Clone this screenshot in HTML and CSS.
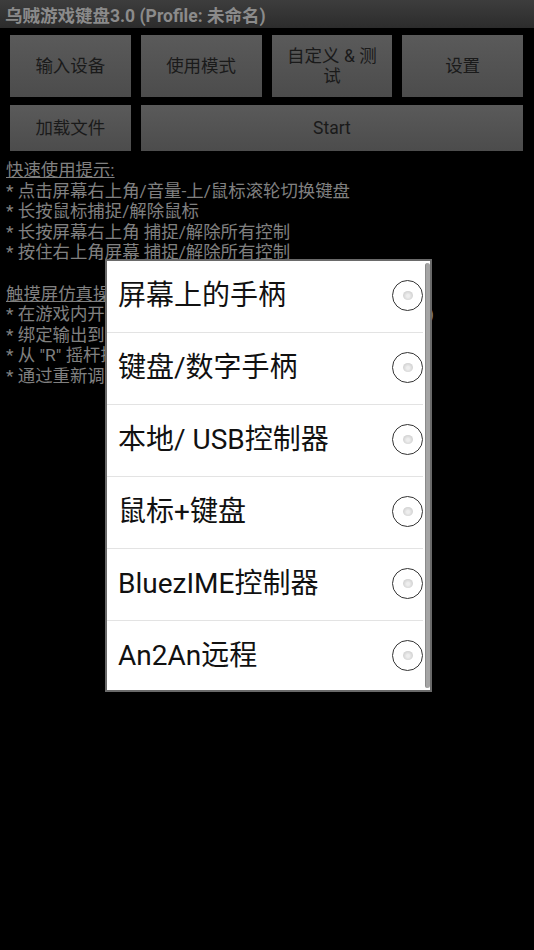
FILE: index.html
```html
<!DOCTYPE html>
<html lang="zh-CN">
<head>
<meta charset="utf-8">
<title>乌贼游戏键盘3.0</title>
<link rel="stylesheet" href="styles.css">
</head>
<body>
<div class="app">
  <header class="titlebar">乌贼游戏键盘3.0 (Profile: 未命名)</header>

  <div class="toolbar">
    <button class="btn">输入设备</button>
    <button class="btn">使用模式</button>
    <button class="btn">自定义 &amp; 测<br>试</button>
    <button class="btn">设置</button>
    <button class="btn">加载文件</button>
    <button class="btn btn-wide">Start</button>
  </div>

  <section class="tips">
    <p class="tips-head">快速使用提示:</p>
    <p>* 点击屏幕右上角/音量-上/鼠标滚轮切换键盘</p>
    <p>* 长按鼠标捕捉/解除鼠标</p>
    <p>* 长按屏幕右上角 捕捉/解除所有控制</p>
    <p>* 按住右上角屏幕 捕捉/解除所有控制</p>
    <p class="blank">&nbsp;</p>
    <p class="tips-head">触摸屏仿真操作:</p>
    <p>* 在游戏内开启虚拟按键，将屏幕触点映射到手柄 (可选)</p>
    <p>* 绑定输出到屏幕触摸点</p>
    <p>* 从 "R" 摇杆控制视角</p>
    <p>* 通过重新调整触摸点</p>
  </section>
</div>

<div class="dialog" role="dialog">
  <ul class="choices">
    <li class="choice"><span class="label">屏幕上的手柄</span><span class="radio"></span></li>
    <li class="choice"><span class="label">键盘/数字手柄</span><span class="radio"></span></li>
    <li class="choice"><span class="label">本地/ USB控制器</span><span class="radio"></span></li>
    <li class="choice"><span class="label">鼠标+键盘</span><span class="radio"></span></li>
    <li class="choice"><span class="label">BluezIME控制器</span><span class="radio"></span></li>
    <li class="choice"><span class="label">An2An远程</span><span class="radio"></span></li>
  </ul>
  <div class="scroll-thumb"></div>
</div>
</body>
</html>
```

FILE: styles.css
```css
* {
  box-sizing: border-box;
}

html,
body {
  margin: 0;
  padding: 0;
  background: #000;
}

body {
  width: 534px;
  height: 950px;
  overflow: hidden;
  font-family: Roboto, "Noto Sans CJK SC", "Noto Sans", sans-serif;
  position: relative;
}

/* top title bar */
.titlebar {
  height: 28px;
  padding: 0 5px;
  display: flex;
  align-items: center;
  background: linear-gradient(#3d3d3d, #2c2c2c);
  color: #8b8b8b;
  font-size: 17.5px;
  font-weight: 700;
  white-space: nowrap;
}

/* main action buttons */
.toolbar {
  display: grid;
  grid-template-columns: repeat(4, 1fr);
  grid-template-rows: 62px 46px;
  column-gap: 10px;
  row-gap: 8px;
  padding: 7px 11px 0 10px;
}

.btn {
  border: 0;
  margin: 0;
  padding: 0 4px;
  background: linear-gradient(#5a5a5a, #4c4c4c);
  color: #1a1a1a;
  font-family: inherit;
  font-size: 17.5px;
  line-height: 20px;
  text-align: center;
}

.btn-wide {
  grid-column: 2 / 5;
}

/* help text below the buttons */
.tips {
  padding: 9px 0 0 6px;
  color: #808080;
  font-size: 17.4px;
  line-height: 20.6px;
}

.tips p {
  margin: 0;
  white-space: nowrap;
}

.tips-head {
  text-decoration: underline;
}

/* device picker overlay */
.dialog {
  position: absolute;
  left: 105px;
  top: 259px;
  width: 327px;
  height: 433px;
  background: #fff;
  border: 2px solid #6a6a6a;
  display: flex;
}

.choices {
  list-style: none;
  margin: 0;
  padding: 0;
  width: 316px;
}

.choice {
  height: 72px;
  display: flex;
  align-items: center;
  justify-content: space-between;
  padding-left: 11px;
  border-bottom: 1px solid #e3e3e3;
}

.choice:last-child {
  border-bottom: 0;
}

.label {
  color: #111;
  font-size: 28px;
  line-height: 1;
  margin-bottom: 2px;
  white-space: nowrap;
}

.radio {
  width: 31px;
  height: 31px;
  margin-bottom: 3px;
  border-radius: 50%;
  border: 1.7px solid #333;
  display: flex;
  align-items: center;
  justify-content: center;
  background: #fff;
}

.radio::after {
  content: "";
  width: 10px;
  height: 9px;
  border-radius: 50%;
  background: radial-gradient(circle at 50% 55%, #eeeeee 20%, #cfcfcf 75%);
}

.scroll-thumb {
  width: 5px;
  margin: 2px 0 2px 2px;
  border-radius: 3px;
  background: #a4a4a4;
  border-left: 1px solid #8a8a8a;
}
```
